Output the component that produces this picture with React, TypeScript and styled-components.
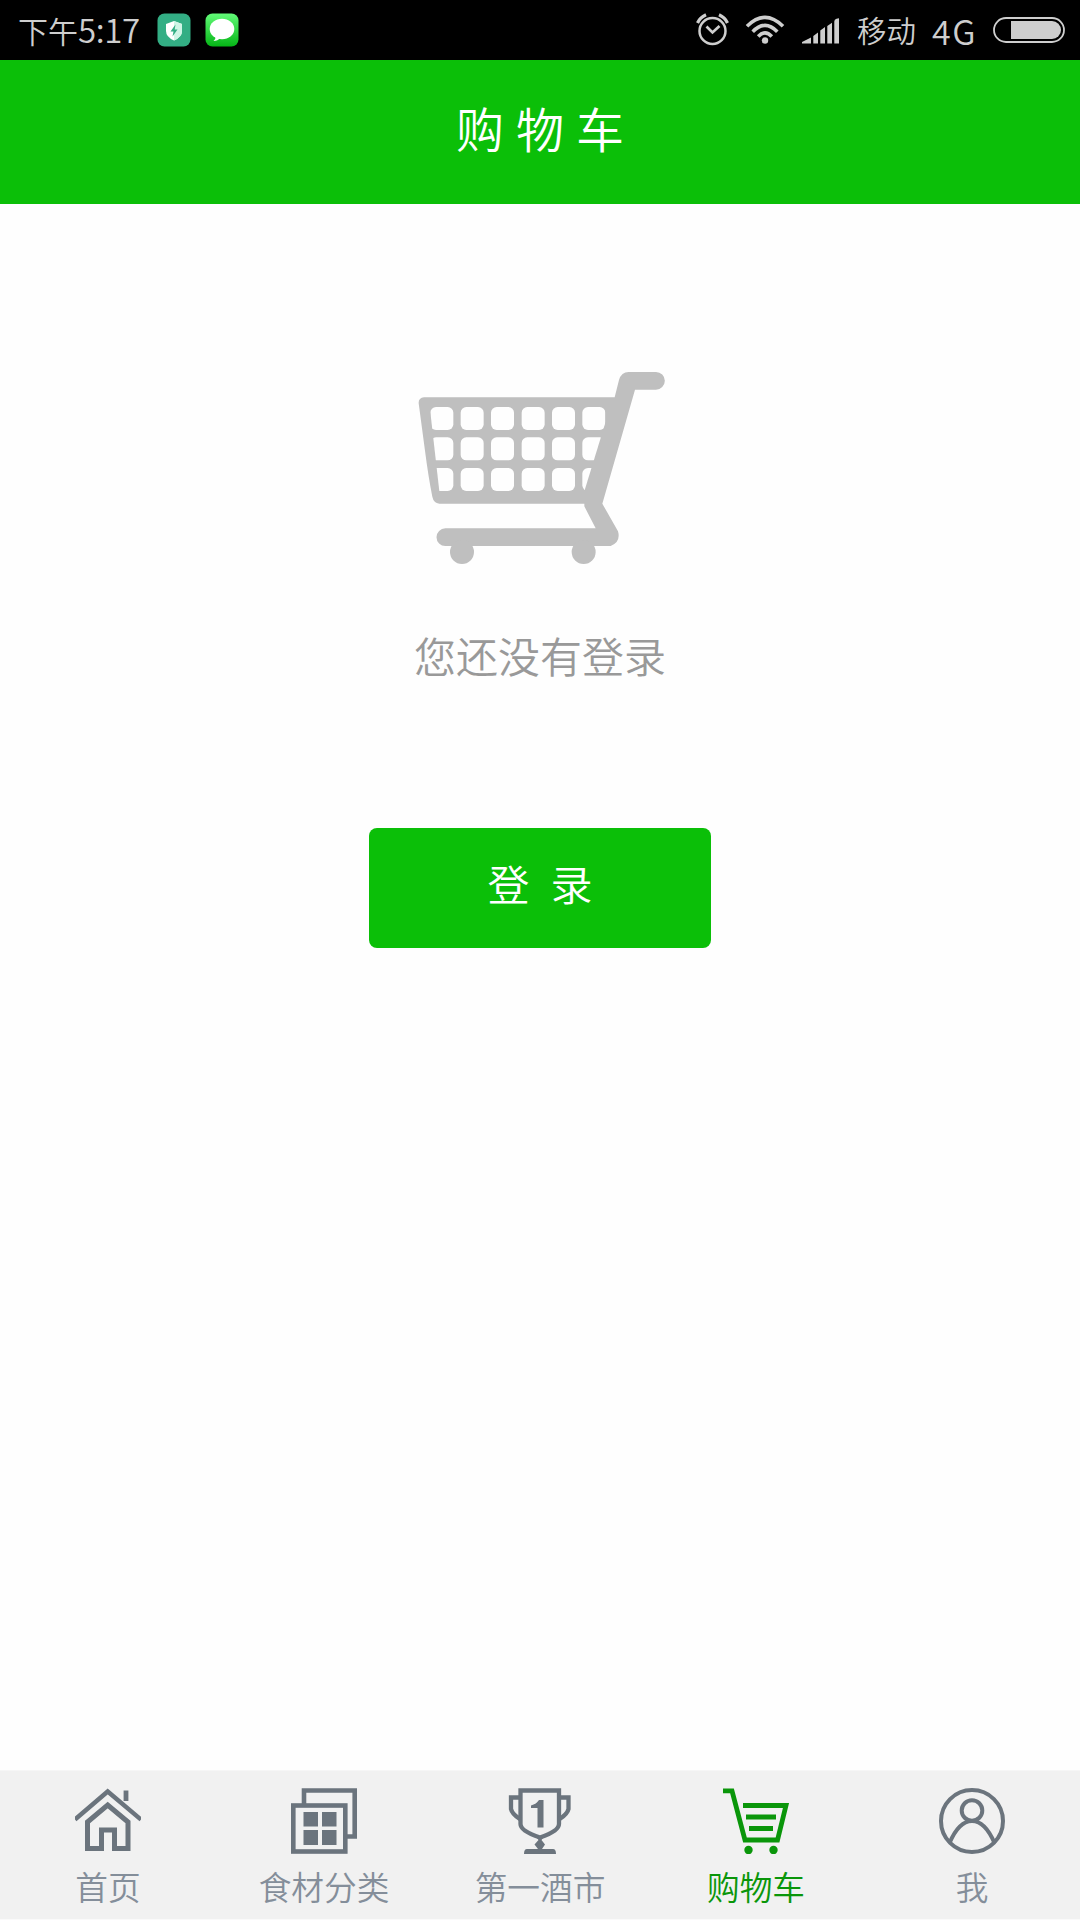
import React from 'react';
import styled, { createGlobalStyle } from 'styled-components';

const GREEN = '#0bbf08';
const ACTIVE = '#0a960a';
const SLATE = '#6b747d';
const CJK = '"Noto Sans CJK SC DemiLight", "Noto Sans CJK SC Light", "Noto Sans CJK SC"';

const GlobalStyle = createGlobalStyle`
  * { box-sizing: border-box; }
  body {
    margin: 0;
    background: #fefefe;
    font-family: Roboto, ${CJK}, sans-serif;
  }
  svg { display: block; flex: none; }
`;

const Screen = styled.div`
  display: flex;
  flex-direction: column;
  width: 1080px;
  height: 1920px;
  background: #fefefe;
`;

const StatusBar = styled.div`
  display: flex;
  align-items: center;
  justify-content: space-between;
  height: 60px;
  padding: 0 15px 0 18px;
  background: #000;
  color: #cecece;
`;

const StatusGroup = styled.div`
  display: flex;
  align-items: center;
  height: 60px;
`;

const Clock = styled.div`
  display: flex;
  align-items: baseline;
  width: 139px;
  padding-top: 2px;
  line-height: 60px;
  white-space: nowrap;
`;

const Period = styled.span`
  font-size: 30px;
`;

const Digits = styled.span`
  font-family: ${CJK}, sans-serif;
  font-size: 33px;
  letter-spacing: -0.4px;
`;

const Carrier = styled.span`
  width: 75px;
  padding-top: 3px;
  font-size: 29.5px;
  line-height: 60px;
`;

const Network = styled.span`
  width: 61px;
  padding-top: 1px;
  font-family: ${CJK}, sans-serif;
  font-size: 34px;
  letter-spacing: 1.5px;
  line-height: 60px;
`;

const Header = styled.header`
  display: flex;
  justify-content: center;
  height: 144px;
  padding-top: 37px;
  background: ${GREEN};
`;

const Title = styled.h1`
  margin: 0;
  color: #fff;
  font-size: 48px;
  font-weight: 400;
  line-height: 70px;
  white-space: pre;
`;

const Content = styled.main`
  display: flex;
  flex: 1;
  flex-direction: column;
  align-items: center;
  padding-top: 146px;
`;

const Message = styled.p`
  margin: 49px 0 0;
  color: #999;
  font-size: 42px;
  line-height: 60px;
`;

const LoginButton = styled.button`
  width: 342px;
  height: 120px;
  margin: 139px 0 0;
  padding: 0 0 2px;
  border: 0;
  border-radius: 8px;
  background: ${GREEN};
  color: #fff;
  font-family: inherit;
  font-size: 42px;
  line-height: 60px;
  white-space: pre;
`;

const TabBar = styled.nav`
  display: grid;
  grid-template-columns: repeat(5, 1fr);
  height: 150px;
  border-top: 1px solid #f6f6f6;
  border-bottom: 1px solid #fafafa;
  background: #f1f1f1;
`;

const Tab = styled.a<{ $active?: boolean }>`
  display: flex;
  flex-direction: column;
  align-items: center;
  padding-top: 17px;
  color: ${(p) => (p.$active ? ACTIVE : SLATE)};
`;

const TabLabel = styled.span<{ $active?: boolean }>`
  margin-top: 11px;
  color: ${(p) => (p.$active ? ACTIVE : '#848e9a')};
  font-size: 32.7px;
  font-weight: 300;
  line-height: 48px;
`;

const SecurityIcon = () => (
  <svg width="34" height="34" viewBox="0 0 34 34">
    <rect x="0.5" y="0.5" width="33" height="33" rx="7" fill="#33ae84" />
    <path d="M17 8 L25 11 V18 Q25 24 17 27.500 Q9 24 9 18 V11 Z" fill="#fff" />
    <path d="M17 8 L25 11 V18 Q25 24 17 27.500 Z" fill="#cff5e6" />
    <path d="M18.500 11.500 L13.500 18.500 H16.500 L15.500 23.500 L20.500 16.500 H17.700 Z" fill="#33ae84" />
  </svg>
);

const MessagesIcon = () => (
  <svg width="34" height="34" viewBox="0 0 34 34">
    <defs>
      <linearGradient id="bubble" x1="0" y1="0" x2="0" y2="1">
        <stop offset="0" stopColor="#62fb78" />
        <stop offset="1" stopColor="#05b516" />
      </linearGradient>
    </defs>
    <rect x="0.5" y="0.5" width="33" height="33" rx="7" fill="url(#bubble)" />
    <ellipse cx="17" cy="16" rx="12.300" ry="10.300" fill="#fff" />
    <path d="M10.500 23 Q11 26 8.500 28 Q13 28 15 25 Z" fill="#fff" />
  </svg>
);

const AlarmIcon = () => (
  <svg width="34" height="34" viewBox="0 0 34 34" fill="none" stroke="#cecece">
    <circle cx="16.500" cy="18" r="13" strokeWidth="2.500" />
    <path d="M1.500 10 Q4 4.500 10 1.800 M31.500 10 Q29 4.500 23 1.800" strokeWidth="3.200" />
    <path d="M10.500 13.500 L16.500 19.500 L23.500 13" strokeWidth="2.700" />
  </svg>
);

const WifiIcon = () => (
  <svg width="40" height="30" viewBox="0 0 40 30" fill="none" stroke="#cecece" strokeWidth="3.600">
    <path d="M2 11.300 Q20 -6.500 38 11.300" />
    <path d="M7.700 16.700 Q20 4 32.300 16.700" />
    <path d="M13.200 21.500 Q20 14.200 26.800 21.500" />
    <circle cx="20" cy="25.500" r="3.200" fill="#cecece" stroke="none" />
  </svg>
);

const SignalIcon = () => (
  <svg width="38" height="26" viewBox="0 0 38 26" fill="#cecece">
    <path d="M0 25.500 V24 L9 19.500 V25.500 Z M11.300 25.500 V18 L16 14.500 V25.500 Z M18.300 25.500 V12.500 L23 9 V25.500 Z M25.300 25.500 V8 L30 4.800 V25.500 Z M32.300 25.500 V3.500 Q32.300 1.500 34.500 0.800 L37 0.300 V25.500 Z" />
  </svg>
);

const BatteryIcon = () => (
  <svg width="72" height="26" viewBox="0 0 72 26">
    <rect x="1" y="1" width="70" height="24" rx="12" fill="none" stroke="#cecece" strokeWidth="1.800" />
    <path d="M18 4 H59 A9 9 0 0 1 59 22 H18 Z" fill="#cecece" />
  </svg>
);

const HOLE_COLUMNS = [91, 182, 273, 365, 456, 547];
const HOLE_ROWS = [171, 262, 354];

const EmptyCart = () => (
  <svg width="280" height="230" viewBox="0 0 840 690" fill="#bfbfbf">
    <defs>
      <clipPath id="basket">
        <path d="M88 160 L118 424 H553 L617 215 V160 Z" />
      </clipPath>
    </defs>
    <path d="M72 142 H644 L657 90 Q664 66 686 66 H768 A26 26 0 0 1 768 119 H705 L607 461 L654 544 Q663 576 632 588 H136 A26 26 0 0 1 136 535 H587 L553 469 V461 H118 Q101 459 97 440 Q85 380 75 302 L56 160 Q55 144 72 142 Z" />
    <circle cx="186" cy="606" r="36" />
    <circle cx="551" cy="606" r="36" />
    <g fill="#fefefe" clipPath="url(#basket)">
      {HOLE_ROWS.map((y) =>
        HOLE_COLUMNS.map((x) => (
          <rect key={`${x}-${y}`} x={x} y={y} width="69" height="69" rx="17" />
        )),
      )}
    </g>
  </svg>
);

const HomeIcon = () => (
  <svg width="66" height="66" viewBox="0 0 66 66" fill="none" stroke="currentColor">
    <path d="M0 31.500 L32.700 3.500 L66 31.500" strokeWidth="4.400" />
    <path d="M12.500 60.500 V34 L32.700 17 L53 34 V60.500 H39.500 V42 H26.500 V60.500 Z" strokeWidth="5" />
    <path d="M51 2.500 V13" strokeWidth="4.800" />
  </svg>
);

const CategoryIcon = () => (
  <svg width="66" height="66" viewBox="0 0 66 66" fill="none" stroke="currentColor" strokeWidth="4.600">
    <path d="M13 16 V2.500 H63.700 V48.500 H56" />
    <rect x="2.300" y="17.500" width="52" height="46" />
    <path d="M12.500 24 H27 V38.500 H12.500 Z M31 24 H45.500 V38.500 H31 Z M12.500 42 H27 V57 H12.500 Z M31 42 H45.500 V57 H31 Z" fill="currentColor" stroke="none" />
  </svg>
);

const TrophyIcon = () => (
  <svg width="66" height="66" viewBox="0 0 66 66" fill="none" stroke="currentColor" strokeWidth="4.300">
    <path d="M13.500 2.500 H52 V36 Q52 43 33 49.500 Q13.500 43 13.500 36 Z" />
    <path d="M13.500 9.500 H4 V21 Q5 26 13.500 31.500 M52 9.500 H61.500 V21 Q60.500 26 52 31.500" />
    <path d="M30 50 H36 L34.500 52 L38 56.500 L35 61 H46 Q49 61 49 66 H17 Q17 61 20 61 H31 L27.500 56.500 L31.500 52 Z M24 17.500 Q29.500 16 32 12 H36.500 V39.500 H30.500 V20 H24 Z" fill="currentColor" stroke="none" />
  </svg>
);

const CartIcon = () => (
  <svg width="66" height="66" viewBox="0 0 66 66" fill="none" stroke="currentColor" strokeWidth="4.800">
    <path d="M0 2.900 H9 L22 52 H54.500 L63 17.500 H20" />
    <path d="M23 29 H53 M26 40.500 H50" />
    <circle cx="25.500" cy="62" r="4.200" fill="currentColor" stroke="none" />
    <circle cx="50.500" cy="62" r="4.200" fill="currentColor" stroke="none" />
  </svg>
);

const ProfileIcon = () => (
  <svg width="66" height="66" viewBox="0 0 66 66" fill="none" stroke="currentColor" strokeWidth="4">
    <circle cx="33" cy="33" r="31" />
    <circle cx="33" cy="22.500" r="10.300" />
    <path d="M10.500 55 Q20 33 33 33 Q46 33 55.500 55" />
  </svg>
);

const TABS = [
  { label: '首页', Icon: HomeIcon },
  { label: '食材分类', Icon: CategoryIcon },
  { label: '第一酒市', Icon: TrophyIcon },
  { label: '购物车', Icon: CartIcon, active: true },
  { label: '我', Icon: ProfileIcon },
];

const IconSlot = styled.span<{ $gap: number; $shift?: number }>`
  display: flex;
  margin-right: ${(p) => p.$gap}px;
  padding-top: ${(p) => p.$shift || 0}px;
`;

export default function App() {
  return (
    <>
      <GlobalStyle />
      <Screen>
        <StatusBar>
          <StatusGroup>
            <Clock>
              <Period>下午</Period>
              <Digits>5:17</Digits>
            </Clock>
            <IconSlot $gap={14}><SecurityIcon /></IconSlot>
            <IconSlot $gap={0}><MessagesIcon /></IconSlot>
          </StatusGroup>
          <StatusGroup>
            <IconSlot $gap={15}><AlarmIcon /></IconSlot>
            <IconSlot $gap={17}><WifiIcon /></IconSlot>
            <IconSlot $gap={17} $shift={2}><SignalIcon /></IconSlot>
            <Carrier>移动</Carrier>
            <Network>4G</Network>
            <IconSlot $gap={0}><BatteryIcon /></IconSlot>
          </StatusGroup>
        </StatusBar>
        <Header>
          <Title>购 物 车</Title>
        </Header>
        <Content>
          <EmptyCart />
          <Message>您还没有登录</Message>
          <LoginButton type="button">{'登  录'}</LoginButton>
        </Content>
        <TabBar>
          {TABS.map(({ label, Icon, active }) => (
            <Tab key={label} $active={active}>
              <Icon />
              <TabLabel $active={active}>{label}</TabLabel>
            </Tab>
          ))}
        </TabBar>
      </Screen>
    </>
  );
}
